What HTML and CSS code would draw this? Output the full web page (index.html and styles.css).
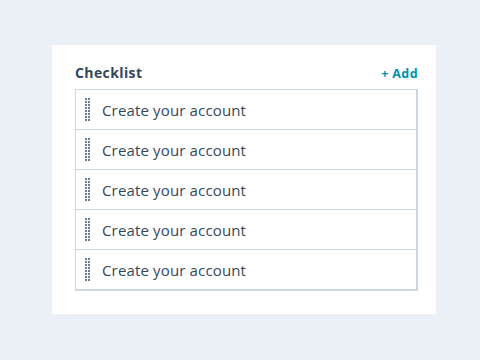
FILE: index.html
```html
<!DOCTYPE html>
<html>
<head>
<meta charset="utf-8">
<link rel="stylesheet" href="styles.css">
</head>
<body>
<div class="card">
  <div class="header">
    <span class="title">Checklist</span>
    <span class="add">+ Add</span>
  </div>
  <ul class="list">
    <li class="row"><span class="handle"></span><span class="label">Create your account</span></li>
    <li class="row"><span class="handle"></span><span class="label">Create your account</span></li>
    <li class="row"><span class="handle"></span><span class="label">Create your account</span></li>
    <li class="row"><span class="handle"></span><span class="label">Create your account</span></li>
    <li class="row"><span class="handle"></span><span class="label">Create your account</span></li>
  </ul>
</div>
</body>
</html>
```
FILE: styles.css
```css
html, body { margin: 0; padding: 0; }
body {
  background: #eaf0f6;
  width: 480px;
  height: 360px;
  font-family: "Open Sans", "Liberation Sans", sans-serif;
  color: #33475b;
}
.card {
  margin: 45px 0 0 52px;
  width: 384px;
  height: 269px;
  background: #fff;
  padding: 18px 18px 0 23px;
  box-sizing: border-box;
}
.header {
  display: flex;
  justify-content: space-between;
  align-items: baseline;
  height: 26px;
}
.title {
  font-weight: 700;
  font-size: 14px;
  letter-spacing: 0.4px;
  color: #33475b;
}
.add {
  font-weight: 700;
  font-size: 12.5px;
  letter-spacing: 0.4px;
  color: #0091ae;
}
.list {
  list-style: none;
  margin: 0;
  padding: 0;
  border: 1px solid #cbd6e2;
  border-bottom-width: 2px;
  border-right-width: 2px;
}
.row {
  height: 39px;
  display: flex;
  align-items: center;
  border-top: 1px solid #cbd6e2;
  padding-left: 9px;
}
.row:first-child { border-top: none; }
.handle {
  width: 5px;
  height: 23px;
  background: #6a7f96;
  -webkit-mask: repeating-linear-gradient(to bottom, #000 0 2px, transparent 2px 3px),
                linear-gradient(to right, #000 0 2px, transparent 2px 3px, #000 3px 5px);
  -webkit-mask-composite: source-in;
  mask-composite: intersect;
  margin-right: 12px;
}
.label {
  font-size: 15px;
  letter-spacing: 0.15px;
}
```
